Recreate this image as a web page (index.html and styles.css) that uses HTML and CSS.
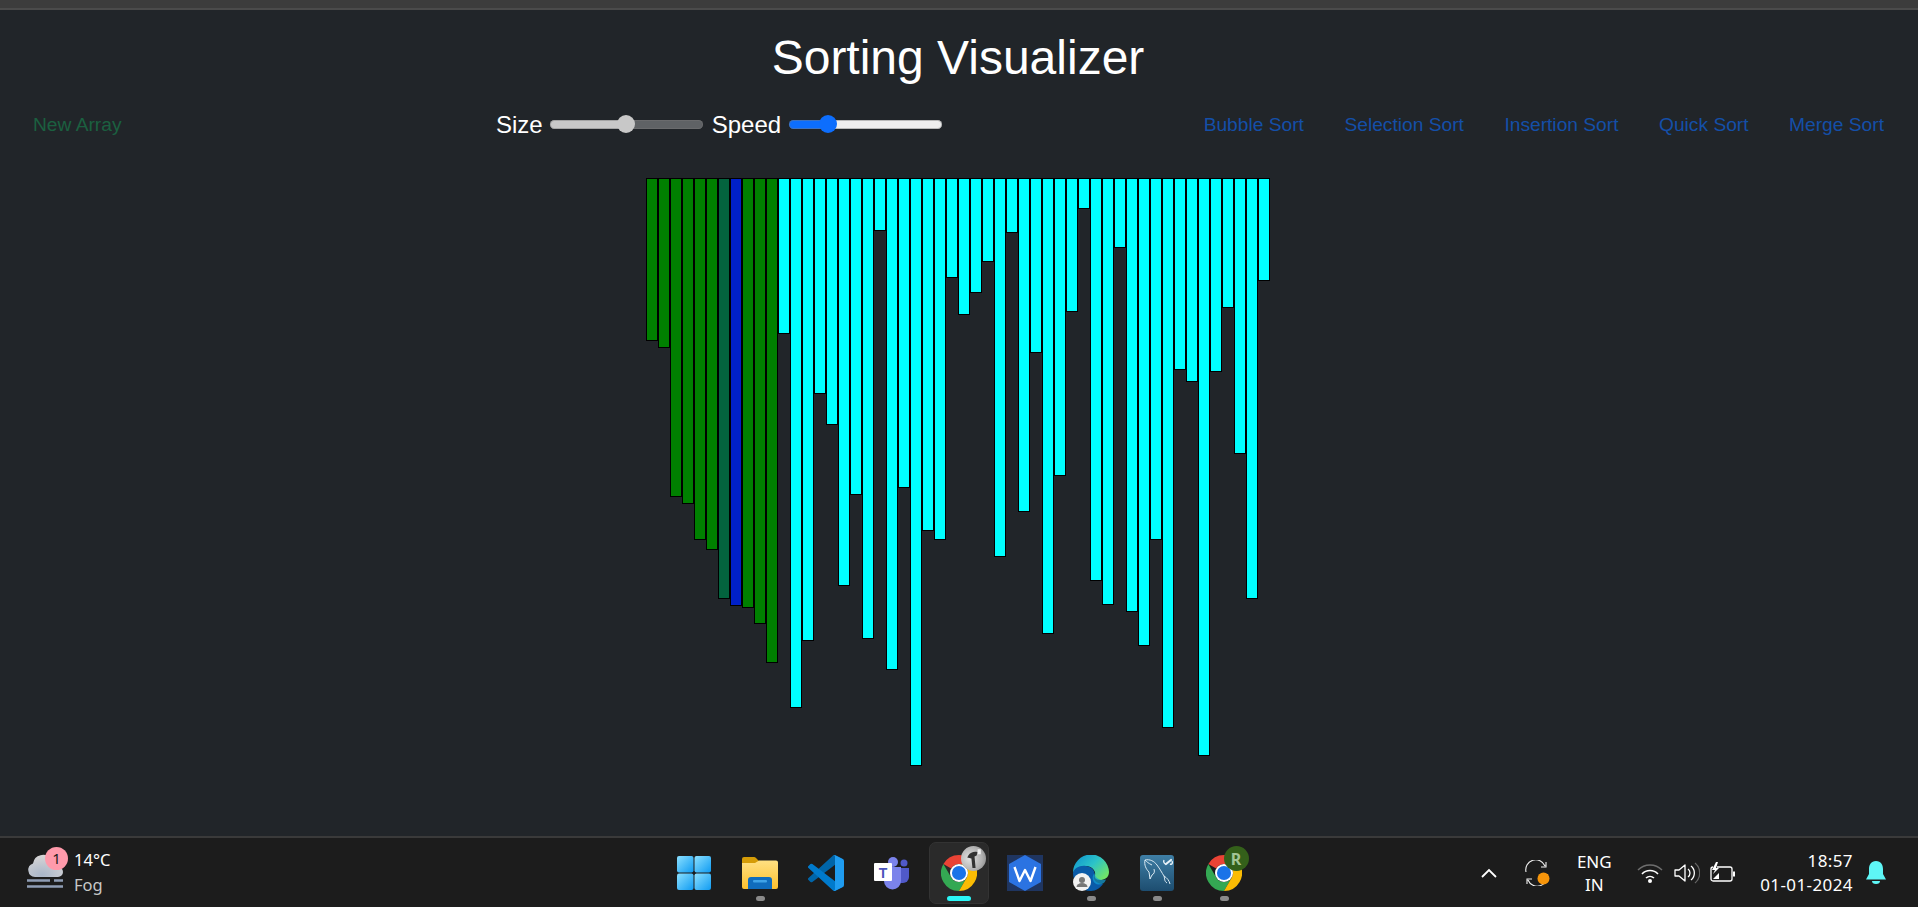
FILE: index.html
```html
<!DOCTYPE html>
<html lang="en">
<head>
<meta charset="utf-8">
<title>Sorting Visualizer</title>
<link rel="stylesheet" href="styles.css">
</head>
<body>
<svg class="defs" width="0" height="0" aria-hidden="true">
  <symbol id="chrome" viewBox="0 0 48 48">
    <path fill="#ea4335" d="M24 0A24 24 0 0 1 44.8 12H24A12 12 0 0 0 13.6 18L3.2 12A24 24 0 0 1 24 0Z"/>
    <path fill="#34a853" d="M3.2 12 13.6 30A12 12 0 0 0 34.4 30L24 48A24 24 0 0 1 3.2 12Z"/>
    <path fill="#fbbc04" d="M44.8 12H24A12 12 0 0 1 34.4 30L24 48A24 24 0 0 0 44.8 12Z"/>
    <circle cx="24" cy="24" r="12" fill="#fff"/>
    <circle cx="24" cy="24" r="9.4" fill="#1a73e8"/>
  </symbol>
  <linearGradient id="winGrad" x1="0" y1="0" x2="1" y2="1">
    <stop offset="0" stop-color="#8be0ff"/><stop offset="1" stop-color="#0f9bf2"/>
  </linearGradient>
  <linearGradient id="folderGrad" x1="0" y1="0" x2="0" y2="1">
    <stop offset="0" stop-color="#ffe082"/><stop offset="1" stop-color="#fcc02e"/>
  </linearGradient>
  <linearGradient id="edgeTop" x1="0" y1="0" x2="1" y2="0.7">
    <stop offset="0" stop-color="#0c8fd0"/><stop offset=".55" stop-color="#2cc3c8"/><stop offset="1" stop-color="#6fe36a"/>
  </linearGradient>
  <linearGradient id="sqlGrad" x1="0" y1="0" x2="0" y2="1">
    <stop offset="0" stop-color="#3f7fa6"/><stop offset="1" stop-color="#1d4d70"/>
  </linearGradient>
  <radialGradient id="cloudGrad" cx=".4" cy=".9" r=".9">
    <stop offset="0" stop-color="#a9b6c9"/><stop offset="1" stop-color="#d8d6d6"/>
  </radialGradient>
</svg>

<div class="window-strip"></div>

<h1 class="title">Sorting Visualizer</h1>

<nav class="controls">
  <a class="new-array">New Array</a>
  <div class="sliders">
    <label class="slider-label" for="size">Size</label>
    <input class="slider slider-size" id="size" type="range" min="0" max="100" value="50">
    <label class="slider-label" for="speed">Speed</label>
    <input class="slider slider-speed" id="speed" type="range" min="0" max="100" value="22">
  </div>
  <div class="sorts">
    <a class="sort">Bubble Sort</a>
    <a class="sort">Selection Sort</a>
    <a class="sort">Insertion Sort</a>
    <a class="sort">Quick Sort</a>
    <a class="sort">Merge Sort</a>
  </div>
</nav>

<main class="chart">
  <div class="bar done" style="height:163px"></div>
  <div class="bar done" style="height:170px"></div>
  <div class="bar done" style="height:319px"></div>
  <div class="bar done" style="height:326px"></div>
  <div class="bar done" style="height:362px"></div>
  <div class="bar done" style="height:372px"></div>
  <div class="bar turning" style="height:421px"></div>
  <div class="bar active" style="height:428px"></div>
  <div class="bar done" style="height:430px"></div>
  <div class="bar done" style="height:446px"></div>
  <div class="bar done" style="height:485px"></div>
  <div class="bar" style="height:156px"></div>
  <div class="bar" style="height:530px"></div>
  <div class="bar" style="height:463px"></div>
  <div class="bar" style="height:216px"></div>
  <div class="bar" style="height:247px"></div>
  <div class="bar" style="height:408px"></div>
  <div class="bar" style="height:317px"></div>
  <div class="bar" style="height:461px"></div>
  <div class="bar" style="height:53px"></div>
  <div class="bar" style="height:492px"></div>
  <div class="bar" style="height:310px"></div>
  <div class="bar" style="height:588px"></div>
  <div class="bar" style="height:353px"></div>
  <div class="bar" style="height:362px"></div>
  <div class="bar" style="height:100px"></div>
  <div class="bar" style="height:137px"></div>
  <div class="bar" style="height:115px"></div>
  <div class="bar" style="height:84px"></div>
  <div class="bar" style="height:379px"></div>
  <div class="bar" style="height:55px"></div>
  <div class="bar" style="height:334px"></div>
  <div class="bar" style="height:175px"></div>
  <div class="bar" style="height:456px"></div>
  <div class="bar" style="height:298px"></div>
  <div class="bar" style="height:134px"></div>
  <div class="bar" style="height:31px"></div>
  <div class="bar" style="height:403px"></div>
  <div class="bar" style="height:427px"></div>
  <div class="bar" style="height:70px"></div>
  <div class="bar" style="height:434px"></div>
  <div class="bar" style="height:468px"></div>
  <div class="bar" style="height:362px"></div>
  <div class="bar" style="height:550px"></div>
  <div class="bar" style="height:192px"></div>
  <div class="bar" style="height:204px"></div>
  <div class="bar" style="height:578px"></div>
  <div class="bar" style="height:194px"></div>
  <div class="bar" style="height:130px"></div>
  <div class="bar" style="height:276px"></div>
  <div class="bar" style="height:421px"></div>
  <div class="bar" style="height:103px"></div>
</main>

<footer class="taskbar">
  <div class="weather">
    <div class="weather-icon">
      <svg width="38" height="40" viewBox="0 0 38 40">
        <path fill="url(#cloudGrad)" d="M8 24a7 7 0 0 1-2-13.6A10 10 0 0 1 24 6a8 8 0 0 1 7 8 5 5 0 0 1 0 10Z"/>
        <path stroke="#8f9db5" stroke-width="2.4" fill="none" d="M0 27.500H23M27 27.500H36M0 33.500H36"/>
      </svg>
      <span class="weather-badge">1</span>
    </div>
    <div class="weather-text">
      <span class="temp">14°C</span>
      <span class="cond">Fog</span>
    </div>
  </div>

  <div class="apps">
    <div class="app">
      <svg width="36" height="36" viewBox="0 0 36 36">
        <rect x="1" y="1" width="16.500" height="16.500" rx="2" fill="url(#winGrad)"/>
        <rect x="18.500" y="1" width="16.500" height="16.500" rx="2" fill="url(#winGrad)"/>
        <rect x="1" y="18.500" width="16.500" height="16.500" rx="2" fill="url(#winGrad)"/>
        <rect x="18.500" y="18.500" width="16.500" height="16.500" rx="2" fill="url(#winGrad)"/>
      </svg>
    </div>
    <div class="app">
      <svg width="36" height="34" viewBox="0 0 36 34">
        <path fill="#d59c07" d="M0 3a2 2 0 0 1 2-2h10a3 3 0 0 1 2 1l3 3h17v6H0Z"/>
        <path fill="url(#folderGrad)" d="M0 7h13l4-2.500h17a2 2 0 0 1 2 2V31a2 2 0 0 1-2 2H2a2 2 0 0 1-2-2Z"/>
        <path fill="#0f6cbd" d="M6 24a3 3 0 0 1 3-3h18a3 3 0 0 1 3 3v9H6Z"/>
        <rect x="11" y="24" width="14" height="2.500" rx="1" fill="#3fa3e8"/>
      </svg>
      <span class="pill"></span>
    </div>
    <div class="app">
      <svg width="36" height="36" viewBox="0 0 100 100">
        <path fill="#0065a9" d="M96.460 10.800 75.860.88a6.230 6.230 0 0 0-7.100 1.200L1.320 63.600a4.170 4.170 0 0 0 0 6.160l5.510 5a4.170 4.170 0 0 0 5.320.24L93.400 13.370c2.730-2.070 6.650-.12 6.650 3.300v-.24a6.250 6.250 0 0 0-3.550-5.630z"/>
        <path fill="#007acc" d="M96.460 89.200 75.860 99.120a6.230 6.230 0 0 1-7.100-1.200L1.320 36.400a4.170 4.170 0 0 1 0-6.160l5.510-5a4.170 4.170 0 0 1 5.320-.24L93.400 86.630c2.730 2.070 6.650.12 6.650-3.300v.24a6.250 6.250 0 0 1-3.550 5.630z"/>
        <path fill="#1f9cf0" d="M75.860 99.130a6.230 6.230 0 0 1-7.100-1.200c2.300 2.300 6.240.67 6.240-2.580V4.650c0-3.250-3.940-4.880-6.240-2.580a6.230 6.230 0 0 1 7.100-1.200l20.600 9.900A6.250 6.250 0 0 1 100 16.400v67.200a6.250 6.250 0 0 1-3.540 5.630z"/>
      </svg>
    </div>
    <div class="app">
      <svg width="36" height="34" viewBox="0 0 36 34">
        <circle cx="19" cy="6" r="5" fill="#7b83eb"/>
        <circle cx="30" cy="7" r="3.500" fill="#5059c9"/>
        <path fill="#5059c9" d="M24 12h11v9a6 6 0 0 1-6 6h-5Z"/>
        <path fill="#7b83eb" d="M10 11h17v14a8.500 8.500 0 0 1-17 0Z"/>
        <rect x="0" y="7" width="18" height="18" rx="1" fill="#fff"/>
        <text class="teams-t" x="9" y="21.500" text-anchor="middle">T</text>
      </svg>
    </div>
    <div class="app app-active">
      <svg width="36" height="36"><use href="#chrome" width="36" height="36"/></svg>
      <span class="avatar avatar-incognito">
        <svg width="25" height="25" viewBox="0 0 24 24"><path fill="#333" d="M7 9c2-3 6-4 9-3l-1 3-2 1 1 11h-3l-1-9-4-1Z"/><path fill="#efefef" d="M16 3h3v5h-3Z"/></svg>
      </span>
      <span class="pill pill-active"></span>
    </div>
    <div class="app">
      <svg width="36" height="36" viewBox="0 0 36 36">
        <rect width="36" height="36" fill="#1f3560"/>
        <path fill="#2b73e2" d="M18 0 34 9V27L18 36 2 27V9Z"/>
        <path fill="none" stroke="#fff" stroke-width="2.400" stroke-linejoin="round" d="M7.500 12 12.500 26 18 15 23.500 26 28.500 12"/>
      </svg>
    </div>
    <div class="app">
      <svg width="36" height="36" viewBox="0 0 36 36">
        <path fill="url(#edgeTop)" d="M0 18A18 18 0 0 1 36 17C36 23 31 25 27 25 23 25 21 23 22 20 23 16 19 11 13 11 7 11 1 15 0 18Z"/>
        <path fill="#0a5ba8" d="M0 18C1 13 7 10 13 11 19 12 23 16 21 21 20 25 24 29 30 29 27 33 23 36 18 36 8 36 0 28 0 18Z"/>
        <path fill="#13a0d6" d="M30 28.500C25 31 21 29 20 25 19 22 20 20 21.500 18 22 22 25 26 33 24.500 32.500 26 31.500 27.500 30 28.500Z" opacity=".7"/>
      </svg>
      <span class="edge-badge">
        <svg width="18" height="18" viewBox="0 0 18 18"><circle cx="9" cy="9" r="9" fill="#f2f2f2"/><circle cx="9" cy="7" r="3" fill="#777"/><path fill="#777" d="M3.500 14a5.500 4 0 0 1 11 0Z"/></svg>
      </span>
      <span class="pill"></span>
    </div>
    <div class="app">
      <svg width="34" height="36" viewBox="0 0 34 36">
        <rect width="34" height="36" rx="3" fill="url(#sqlGrad)"/>
        <path fill="none" stroke="#dcebf4" stroke-width="1" d="M5 5C10 4 14 6 17 10 20 14 22 18 24 21 27 23 29 25 30 29M24 21C25 24 24 26 27 28M5 5C4 10 6 14 9 17L10 24 12 20C14 19 15 17 14 14M5 5C7 7 8 8 12 10"/>
        <path fill="none" stroke="#e8f2f8" stroke-width="2.200" stroke-linecap="round" d="M26 9 31 5"/>
        <path fill="none" stroke="#e8f2f8" stroke-width="1.400" d="M24 5C23 7 24.500 9 26 9M30 9C32 10 33 8 32 6"/>
      </svg>
      <span class="pill"></span>
    </div>
    <div class="app">
      <svg width="36" height="36"><use href="#chrome" width="36" height="36"/></svg>
      <span class="avatar avatar-r">R</span>
      <span class="pill"></span>
    </div>
  </div>

  <div class="tray">
    <svg class="t-chevron" width="16" height="10" viewBox="0 0 16 10"><path fill="none" stroke="#fff" stroke-width="1.800" d="M1 9 8 2 15 9"/></svg>
    <span class="t-sync">
      <svg width="26" height="26" viewBox="0 0 26 26">
        <path fill="none" stroke="#f2f2f2" stroke-width="1.100" d="M2 12A10 10 0 0 1 21 6M22 2V7H17M23 14A10 10 0 0 1 4 20M3 24V19H8"/>
        <circle cx="19.500" cy="18.500" r="6" fill="#f7950a"/>
      </svg>
    </span>
    <div class="t-lang"><span>ENG</span><span>IN</span></div>
    <svg class="t-wifi" width="26" height="20" viewBox="0 0 26 20">
      <path fill="none" stroke="#6e6e6e" stroke-width="1.500" d="M1 7A17 17 0 0 1 25 7"/>
      <path fill="none" stroke="#fff" stroke-width="1.600" d="M5 11A11 11 0 0 1 21 11M9 15A6 6 0 0 1 17 15"/>
      <circle cx="13" cy="18" r="2" fill="#fff"/>
    </svg>
    <svg class="t-volume" width="26" height="22" viewBox="0 0 26 22">
      <path fill="none" stroke="#fff" stroke-width="1.300" stroke-linejoin="round" d="M1 8H5L11 3V19L5 14H1Z"/>
      <path fill="none" stroke="#fff" stroke-width="1.300" d="M14 7A5 5 0 0 1 14 15M17 4A9 9 0 0 1 17 18"/>
      <path fill="none" stroke="#666" stroke-width="1.300" d="M21 1A13 13 0 0 1 21 21"/>
    </svg>
    <svg class="t-battery" width="26" height="22" viewBox="0 0 26 22">
      <path fill="none" stroke="#fff" stroke-width="1.300" d="M7 5H20A2 2 0 0 1 22 7V17A2 2 0 0 1 20 19H3A2 2 0 0 1 1 17V7A2 2 0 0 1 3 5"/>
      <rect x="23" y="9.500" width="2" height="5" fill="#fff"/>
      <path fill="#fff" d="M6 0 2 8H5L3 12 9 6H6L8 0Z"/>
      <path fill="#fff" d="M9 11V17H3Z"/>
    </svg>
    <div class="t-clock"><span>18:57</span><span>01-01-2024</span></div>
    <svg class="t-bell" width="24" height="26" viewBox="0 0 24 26">
      <path fill="#5ef6f6" d="M12 1C7 1 5 5 5 9V14L2 19.500H22L19 14V9C19 5 17 1 12 1Z"/>
      <path fill="#5ef6f6" d="M8 21H16A4 3 0 0 1 8 21Z"/>
    </svg>
  </div>
</footer>
</body>
</html>
```

FILE: styles.css
```css
* { box-sizing: border-box; }

html, body { margin: 0; padding: 0; }

body {
  width: 1918px;
  height: 907px;
  overflow: hidden;
  display: flex;
  flex-direction: column;
  background: #212529;
  color: #fff;
  font-family: "Liberation Sans", Arial, sans-serif;
}

.defs { position: absolute; }

.window-strip {
  height: 10px;
  flex: none;
  background: #3c3c3c;
  border-bottom: 2px solid #4b4b4b;
}

.title {
  margin: 0;
  padding: 19px 2px 0 0;
  flex: none;
  font-size: 48px;
  line-height: 58px;
  font-weight: 400;
  text-align: center;
}

.controls {
  flex: none;
  height: 76px;
  padding: 0 34px 0 33px;
  display: grid;
  grid-template-columns: 463px auto 1fr;
  align-items: center;
  font-size: 19.2px;
}

.new-array { color: #1b6040; }

.sliders {
  display: flex;
  align-items: center;
}

.slider-label {
  font-size: 24px;
  line-height: 28px;
  color: #fff;
}

.slider {
  -webkit-appearance: none;
  appearance: none;
  width: 153px;
  height: 18px;
  margin: 0 9px 2px 7px;
  padding: 0;
  background: transparent;
}

.slider-size { --track-left: #c8c8c8; --track-right: #5f6265; --pos: 50%; }
.slider-speed { --track-left: #0d6efd; --track-right: #eeeeee; --pos: 25%; margin-left: 8px; margin-right: 0; }

.slider::-webkit-slider-runnable-track {
  height: 9px;
  border-radius: 5px;
  background: linear-gradient(to right, var(--track-left) var(--pos), var(--track-right) var(--pos));
  box-shadow: 0 0 0 1px rgba(120, 120, 120, .45) inset;
}

.slider::-webkit-slider-thumb {
  -webkit-appearance: none;
  width: 18px;
  height: 18px;
  margin-top: -4.500px;
  border: 0;
  border-radius: 50%;
  background: var(--track-left);
}

.sorts {
  display: flex;
  justify-content: flex-end;
  gap: 40.500px;
}

.sort { color: #144fa8; }

.chart {
  flex: 1;
  min-height: 0;
  padding: 15px 2px 0 0;
  display: flex;
  justify-content: center;
  align-items: flex-start;
}

.bar {
  width: 12px;
  flex: none;
  border: 1px solid #000;
  background: #00ffff;
}

.bar.done { background: #008000; }
.bar.turning { background: #03633e; }
.bar.active { background: #0020c8; }

.taskbar {
  flex: none;
  height: 71px;
  display: grid;
  grid-template-columns: 660.500px auto 1fr;
  background: #1c1c1c;
  border-top: 2px solid #3a3a3a;
  font-family: "Noto Sans", "Open Sans", sans-serif;
}

.weather {
  display: flex;
  align-items: center;
  padding-left: 27px;
}

.weather-icon {
  position: relative;
  width: 47px;
  height: 40px;
}

.weather-badge {
  position: absolute;
  left: 18px;
  top: -6px;
  width: 23px;
  height: 23px;
  border-radius: 50%;
  background: #ff9aab;
  color: #1c1c1c;
  font-size: 15px;
  line-height: 22px;
  text-align: center;
}

.weather-text {
  display: flex;
  flex-direction: column;
  margin-top: -2px;
  font-size: 16.500px;
  line-height: 25px;
}

.temp { color: #fff; }
.cond { color: #c8c8c8; }

.apps { display: flex; }

.app {
  position: relative;
  width: 66.250px;
  height: 69px;
  display: flex;
  align-items: center;
  justify-content: center;
}

.app-active::before {
  content: "";
  position: absolute;
  left: 3px;
  right: 3px;
  top: 4px;
  bottom: 3px;
  background: #2a2a2a;
  border: 1px solid #333;
  border-radius: 7px;
}

.app svg { position: relative; }

.pill {
  position: absolute;
  left: 29px;
  bottom: 6px;
  width: 9px;
  height: 5px;
  border-radius: 3px;
  background: #8a8a8a;
}

.pill-active {
  left: 21px;
  width: 24px;
  background: #2bf6f6;
}

.avatar {
  position: absolute;
  top: 8px;
  width: 25px;
  height: 25px;
  border-radius: 50%;
  overflow: hidden;
  display: flex;
  align-items: center;
  justify-content: center;
}

.avatar-incognito {
  left: 35px;
  background: radial-gradient(circle at 35% 50%, #e2e2e2 0, #b0b0b0 60%, #7a7a7a 100%);
}

.avatar-r {
  left: 33px;
  background: #34601a;
  color: #a3c596;
  font-size: 16px;
  font-weight: 700;
}

.edge-badge {
  position: absolute;
  left: 15px;
  top: 35px;
  width: 18px;
  height: 18px;
  display: block;
}

.edge-badge svg { position: static; display: block; }

.teams-t {
  font-family: "Liberation Sans", Arial, sans-serif;
  font-size: 14px;
  font-weight: 700;
  fill: #4b53bc;
}

.tray {
  display: flex;
  align-items: center;
  justify-content: flex-end;
  padding-right: 30px;
  color: #fff;
  font-size: 17px;
}

.t-chevron { margin-right: 27px; }
.t-sync { display: flex; width: 26px; margin-right: 14px; }
.t-lang {
  width: 60px;
  margin-right: 13px;
  display: flex;
  flex-direction: column;
  align-items: center;
  line-height: 23px;
}
.t-wifi { margin-right: 11px; }
.t-volume { margin-right: 10px; }
.t-battery { margin-right: 24px; }
.t-clock {
  display: flex;
  flex-direction: column;
  align-items: flex-end;
  margin-right: 11px;
  font-size: 17px;
  letter-spacing: .4px;
  line-height: 24px;
}
```
